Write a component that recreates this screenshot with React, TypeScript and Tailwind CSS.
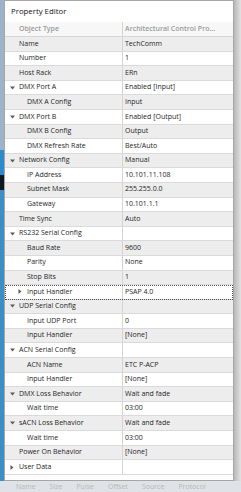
import React from "react";

type Row = {
  label: string;
  value: string;
  level: number;
  exp?: "open" | "closed";
  focus?: boolean;
};

const rows: Row[] = [
  { label: "Name", value: "TechComm", level: 0 },
  { label: "Number", value: "1", level: 0 },
  { label: "Host Rack", value: "ERn", level: 0 },
  { label: "DMX Port A", value: "Enabled [Input]", level: 0, exp: "open" },
  { label: "DMX A Config", value: "Input", level: 1 },
  { label: "DMX Port B", value: "Enabled [Output]", level: 0, exp: "open" },
  { label: "DMX B Config", value: "Output", level: 1 },
  { label: "DMX Refresh Rate", value: "Best/Auto", level: 1 },
  { label: "Network Config", value: "Manual", level: 0, exp: "open" },
  { label: "IP Address", value: "10.101.11.108", level: 1 },
  { label: "Subnet Mask", value: "255.255.0.0", level: 1 },
  { label: "Gateway", value: "10.101.1.1", level: 1 },
  { label: "Time Sync", value: "Auto", level: 0 },
  { label: "RS232 Serial Config", value: "", level: 0, exp: "open" },
  { label: "Baud Rate", value: "9600", level: 1 },
  { label: "Parity", value: "None", level: 1 },
  { label: "Stop Bits", value: "1", level: 1 },
  { label: "Input Handler", value: "PSAP 4.0", level: 1, exp: "closed", focus: true },
  { label: "UDP Serial Config", value: "", level: 0, exp: "open" },
  { label: "Input UDP Port", value: "0", level: 1 },
  { label: "Input Handler", value: "[None]", level: 1 },
  { label: "ACN Serial Config", value: "", level: 0, exp: "open" },
  { label: "ACN Name", value: "ETC P-ACP", level: 1 },
  { label: "Input Handler", value: "[None]", level: 1 },
  { label: "DMX Loss Behavior", value: "Wait and fade", level: 0, exp: "open" },
  { label: "Wait time", value: "03:00", level: 1 },
  { label: "sACN Loss Behavior", value: "Wait and fade", level: 0, exp: "open" },
  { label: "Wait time", value: "03:00", level: 1 },
  { label: "Power On Behavior", value: "[None]", level: 0 },
  { label: "User Data", value: "", level: 0, exp: "closed" },
];

function Arrow({ open }: { open: boolean }) {
  return open ? (
    <svg width="5" height="4" viewBox="0 0 5 4" className="shrink-0">
      <path d="M0 0.5 H5 L2.5 3.5 Z" fill="#5a5a5a" />
    </svg>
  ) : (
    <svg width="4" height="5" viewBox="0 0 4 5" className="shrink-0">
      <path d="M0.5 0 V5 L3.5 2.5 Z" fill="#5a5a5a" />
    </svg>
  );
}

function PropRow({ row, i }: { row: Row; i: number }) {
  const bg = i % 2 === 0 ? "bg-[#ededed]" : "bg-white";
  const pad = row.level === 0 ? "pl-[3px]" : "pl-[11px]";
  return (
    <div
      className={`flex h-[14.6px] border-b border-[#dadada] ${bg} ${
        row.focus ? "outline outline-1 outline-dotted outline-[#555] -outline-offset-1" : ""
      }`}
    >
      <div className={`flex w-[118px] items-center border-r border-[#d4d4d4] ${pad}`}>
        <div className="flex w-[11px] items-center justify-start pl-[1.5px]">
          {row.exp && <Arrow open={row.exp === "open"} />}
        </div>
        <span>{row.label}</span>
      </div>
      <div className="flex flex-1 items-center pl-[2px]">{row.value}</div>
    </div>
  );
}

export default function App() {
  return (
    <div
      className="flex h-[492px] w-[241px] flex-col overflow-hidden bg-[#dfe2e6] text-[7px] text-[#1e1e1e]"
      style={{ fontFamily: '"Open Sans", "Noto Sans", sans-serif' }}
    >
      <div className="flex h-[484px]">
        <div className="flex w-[4px] flex-col">
          <div className="h-[150px] bg-[#9db4c8]" />
          <div className="h-[25px] bg-[#2b8bcc]" />
          <div className="h-[15px] bg-[#101820]" />
          <div className="flex-1 bg-[#3a8fc6]" />
        </div>
        <div className="flex w-[230px] flex-col border border-[#a6a6a6] bg-white">
          <div className="flex h-[21px] items-center pl-[6px] text-[7.8px] text-[#111]">
            Property Editor
          </div>
          <div className="flex flex-col">
            <div className="flex h-[15px] border-b border-[#d6d6d6] bg-[#f7f7f7] font-semibold text-[#9a9a9a]">
              <div className="flex w-[118px] items-center border-r border-[#d4d4d4] pl-[14px]">
                Object Type
              </div>
              <div className="flex flex-1 items-center pl-[2px]">Architectural Control Pro...</div>
            </div>
            {rows.map((r, i) => (
              <PropRow key={i} row={r} i={i} />
            ))}
          </div>
          <div className="flex-1 bg-white" />
        </div>
        <div className="w-[7px] bg-gradient-to-r from-[#b8b8b8] to-[#e2e2e2]" />
      </div>
      <div className="flex gap-[14px] pl-[16px] pt-[1px] text-[7px] text-[#b8b8b8]">
        <span>Name</span>
        <span>Size</span>
        <span>Pulse</span>
        <span>Offset</span>
        <span>Source</span>
        <span>Protocol</span>
      </div>
    </div>
  );
}
